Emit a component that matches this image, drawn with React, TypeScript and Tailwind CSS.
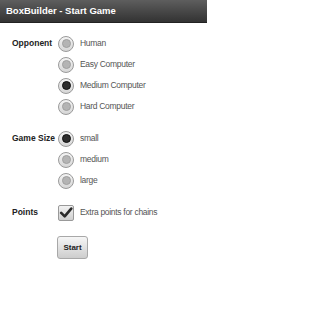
const opponents = ["Human", "Easy Computer", "Medium Computer", "Hard Computer"];
const sizes = ["small", "medium", "large"];

function Radio({ checked }: { checked?: boolean }) {
  return (
    <span className="flex h-[16px] w-[16px] items-center justify-center rounded-full border border-[#9a9a9a] bg-gradient-to-b from-[#f4f4f4] to-[#d6d6d6]">
      <span
        className={
          checked
            ? "h-[9px] w-[9px] rounded-full bg-[#2e2e2e] border border-[#111]"
            : "h-[9px] w-[9px] rounded-full bg-[#b4b4b4] border border-[#a0a0a0]"
        }
      />
    </span>
  );
}

function Row({ label, children }: { label?: string; children: React.ReactNode }) {
  return (
    <div className="flex h-[21px] items-center">
      <div className="w-[46px] text-[8.5px] font-bold text-[#222]">{label}</div>
      {children}
    </div>
  );
}

function Option({ text }: { text: string }) {
  return <span className="ml-[6px] text-[8.5px] tracking-[-0.3px] text-[#555]">{text}</span>;
}

export default function App() {
  return (
    <div className="h-[310px] w-[207px] bg-white font-['Liberation_Sans',Arial,sans-serif]">
      <div className="flex h-[23px] items-center border-b border-[#222] bg-gradient-to-b from-[#5e5e5e] to-[#333] px-[6px]">
        <span className="text-[9.5px] font-bold text-white">BoxBuilder - Start Game</span>
      </div>

      <div className="pl-[12px] pt-[10px]">
        {/* Opponent */}
        {opponents.map((o, i) => (
          <Row key={o} label={i === 0 ? "Opponent" : undefined}>
            <Radio checked={i === 2} />
            <Option text={o} />
          </Row>
        ))}

        <div className="h-[11px]" />

        {/* Game Size */}
        {sizes.map((s, i) => (
          <Row key={s} label={i === 0 ? "Game Size" : undefined}>
            <Radio checked={i === 0} />
            <Option text={s} />
          </Row>
        ))}

        <div className="h-[11px]" />

        {/* Points */}
        <Row label="Points">
          <span className="flex h-[16px] w-[16px] items-center justify-center rounded-[2px] border border-[#999] bg-gradient-to-b from-[#f2f2f2] to-[#cfcfcf]">
            <svg viewBox="0 0 16 16" className="h-[15px] w-[15px]">
              <path d="M2.5 8.5 L6.5 12.5 L14 3.5" fill="none" stroke="#2a2a2a" strokeWidth="3" strokeLinecap="round" strokeLinejoin="round" />
            </svg>
          </span>
          <Option text="Extra points for chains" />
        </Row>

        <div className="ml-[45px] mt-[13px]">
          <button className="flex h-[23px] w-[31px] items-center justify-center rounded-[3px] border border-[#a8a8a8] bg-gradient-to-b from-[#f6f6f6] to-[#cdcdcd] text-[8px] font-bold text-[#222]">
            Start
          </button>
        </div>
      </div>
    </div>
  );
}
